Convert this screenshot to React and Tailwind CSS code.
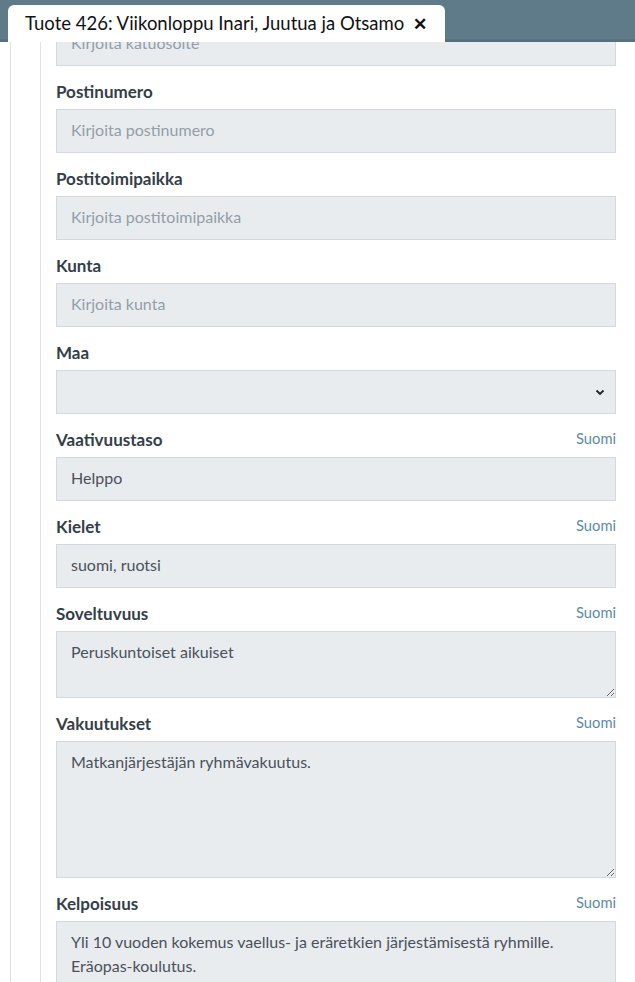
import React from 'react';

const fields = [
  { label: 'Postinumero', placeholder: 'Kirjoita postinumero' },
  { label: 'Postitoimipaikka', placeholder: 'Kirjoita postitoimipaikka' },
  { label: 'Kunta', placeholder: 'Kirjoita kunta' },
  { label: 'Maa', type: 'select' },
  { label: 'Vaativuustaso', value: 'Helppo', lang: true },
  { label: 'Kielet', value: 'suomi, ruotsi', lang: true },
  { label: 'Soveltuvuus', value: 'Peruskuntoiset aikuiset', lang: true, type: 'textarea', h: 'h-[67px]' },
  { label: 'Vakuutukset', value: 'Matkanjärjestäjän ryhmävakuutus.', lang: true, type: 'textarea', h: 'h-[137px]' },
  {
    label: 'Kelpoisuus',
    value: 'Yli 10 vuoden kokemus vaellus- ja eräretkien järjestämisestä ryhmille. Eräopas-koulutus.',
    lang: true,
    type: 'textarea',
    h: 'h-[90px]',
  },
];

const inputBase =
  'w-full border border-[#d3d9de] bg-[#e9ecef] px-[14px] text-[16px] text-[#4a5159] outline-none';

const Field = ({ field }) => (
  <div className="mb-4">
    <div className="flex items-center justify-between h-5 mb-[7px]">
      <span className="text-[17px] font-bold text-[#343e47]">{field.label}</span>
      {field.lang && <span className="text-[14.7px] text-[#5d8aa6] -mt-[3px]">Suomi</span>}
    </div>
    {field.type === 'select' ? (
      <div className={`${inputBase} h-[44px] flex items-center justify-end pr-[10px]`}>
        <svg width="10" height="7" viewBox="0 0 10 7" className="text-[#222]">
          <path d="M1.5 1.5 L5 5 L8.5 1.5" fill="none" stroke="currentColor" strokeWidth="1.8" />
        </svg>
      </div>
    ) : field.type === 'textarea' ? (
      <textarea
        readOnly
        defaultValue={field.value}
        className={`${inputBase} ${field.h} block pt-[8px] pb-[10px] leading-6 resize-y`}
      />
    ) : (
      <input
        readOnly
        defaultValue={field.value}
        placeholder={field.placeholder}
        className={`${inputBase} h-[44px] block pb-[3px] placeholder:text-[#939ea7]`}
      />
    )}
  </div>
);

const App = () => {
  return (
    <div
      className="relative h-[982px] overflow-hidden bg-white"
      style={{ fontFamily: 'Lato, "Open Sans", sans-serif' }}
    >
      {/* Header over the scrolled form */}
      <div className="absolute inset-x-0 top-0 z-10 h-[42px] bg-[#5f7a88] border-b-[3px] border-[#56707d]">
        <div className="absolute left-2 top-[5px] h-[37px] w-[437px] rounded-t-[6px] bg-white flex items-center pl-[17px] gap-[9px]">
          <span className="text-[18.5px] text-[#111]">Tuote 426: Viikonloppu Inari, Juutua ja Otsamo</span>
          <span className="text-[17px] font-bold text-[#111]">✕</span>
        </div>
      </div>

      <div className="ml-[10px] h-full border-l border-[#dfe3e6] pl-[29px]">
        <div className="h-full border-l border-[#dfe3e6] pl-[15px] pr-[19px]">
          <div className="pt-[22px] mb-4">
            <input
              readOnly
              placeholder="Kirjoita katuosoite"
              className={`${inputBase} h-[44px] block pb-[3px] placeholder:text-[#939ea7]`}
            />
          </div>
          {fields.map((f) => (
            <Field key={f.label} field={f} />
          ))}
        </div>
      </div>
    </div>
  );
};

export default App;
